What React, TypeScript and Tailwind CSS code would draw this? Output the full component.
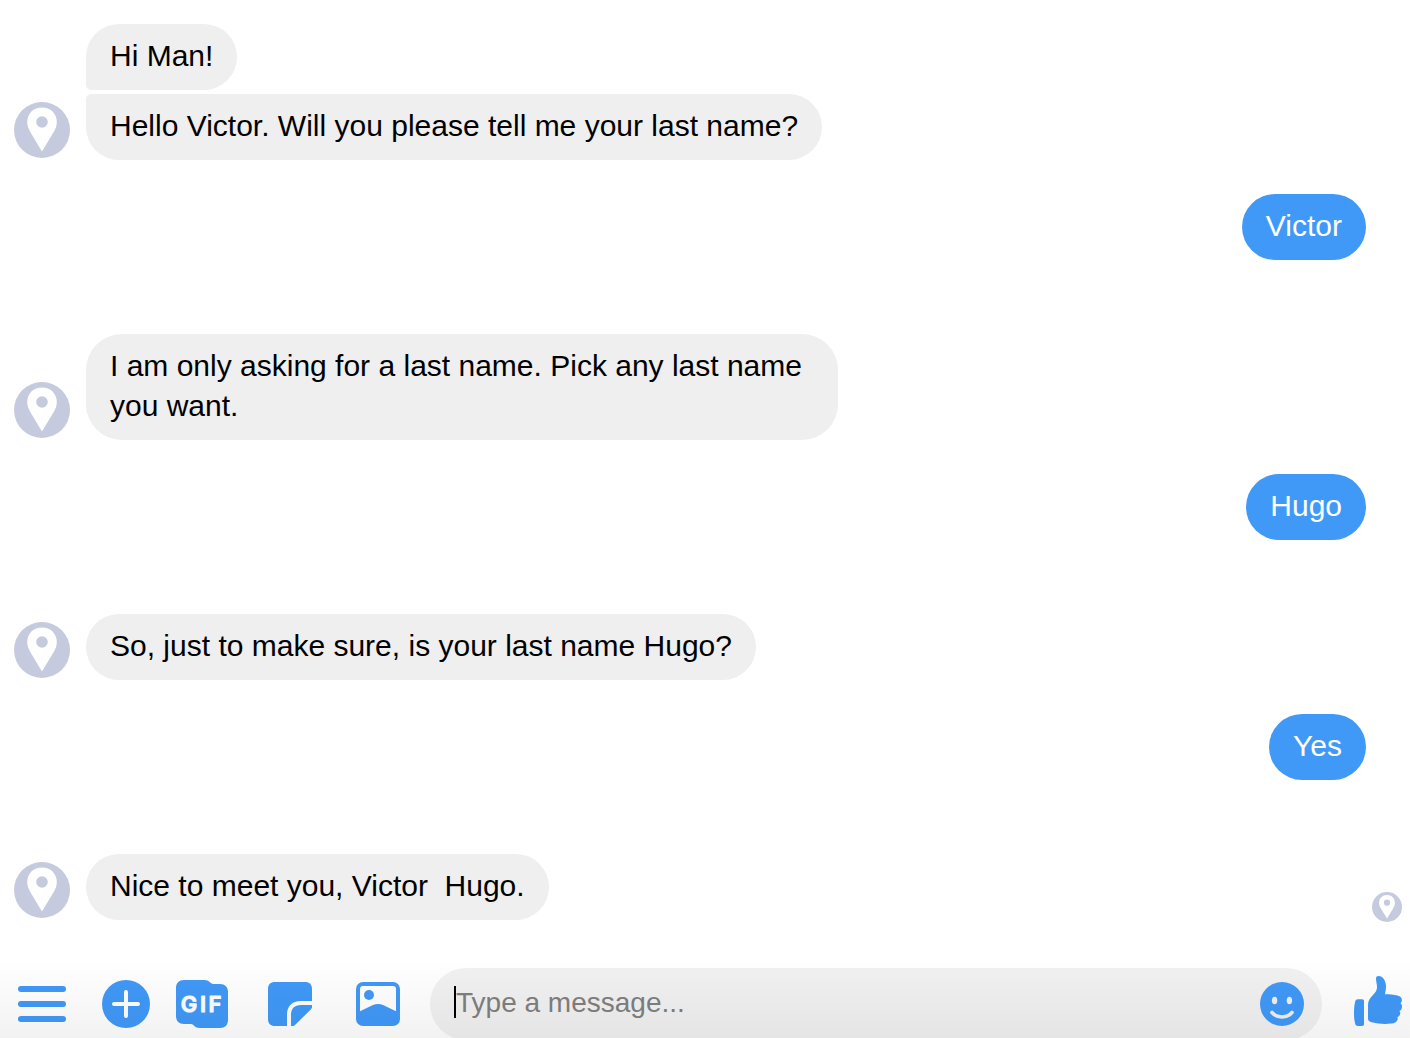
import { useState } from "react";

type Message = { from: "bot" | "me"; lines: string[] };

const messages: Message[] = [
  { from: "bot", lines: ["Hi Man!", "Hello Victor. Will you please tell me your last name?"] },
  { from: "me", lines: ["Victor"] },
  { from: "bot", lines: ["I am only asking for a last name. Pick any last name you want."] },
  { from: "me", lines: ["Hugo"] },
  { from: "bot", lines: ["So, just to make sure, is your last name Hugo?"] },
  { from: "me", lines: ["Yes"] },
  { from: "bot", lines: ["Nice to meet you, Victor  Hugo."] },
];

function PinAvatar({ className }: { className: string }) {
  return (
    <svg viewBox="0 0 56 56" className={className} role="img" aria-label="Bot">
      <circle cx="28" cy="28" r="28" fill="#c6cade" />
      <path
        d="M28 5.5C19.5 5.5 13.2 11.6 13.2 20c0 4 1.4 7 3.4 10.600L28 49.500l11.400-18.900c2-3.600 3.400-6.600 3.400-10.600C42.800 11.600 36.500 5.500 28 5.500z"
        fill="#fff"
      />
      <circle cx="28" cy="20" r="5.800" fill="#c6cade" />
    </svg>
  );
}

function BotGroup({ lines }: { lines: string[] }) {
  return (
    <div className="flex items-end gap-4">
      <PinAvatar className="mb-0.5 size-14 shrink-0" />
      <div className="flex max-w-[752px] flex-col items-start gap-1">
        {lines.map((line, i) => (
          <p
            key={line}
            className={
              "whitespace-pre-wrap rounded-[36px] bg-[#efefef] px-6 pt-3 pb-3.5 text-black " +
              (i > 0 ? "rounded-tl-md " : "") +
              (i < lines.length - 1 ? "rounded-bl-md" : "")
            }
          >
            {line}
          </p>
        ))}
      </div>
    </div>
  );
}

function MenuIcon() {
  return (
    <svg viewBox="0 0 48 48" className="size-12" fill="currentColor" aria-hidden="true">
      <rect y="6" width="48" height="6" rx="3" />
      <rect y="21" width="48" height="6" rx="3" />
      <rect y="36" width="48" height="6" rx="3" />
    </svg>
  );
}

function PlusIcon() {
  return (
    <svg viewBox="0 0 48 48" className="size-12" aria-hidden="true">
      <circle cx="24" cy="24" r="24" fill="currentColor" />
      <path d="M24 12v24M12 24h24" stroke="#fff" strokeWidth="4" strokeLinecap="round" />
    </svg>
  );
}

function GifIcon() {
  return (
    <svg viewBox="0 0 52 48" className="h-12 w-13" aria-hidden="true">
      <path
        d="M8 0h20c3.500 0 5 1.200 6.500 2.800C35.600 3.800 36.500 4 38 4h6c5 0 8 3 8 8v28c0 5-3 8-8 8H24c-3.500 0-5-1.200-6.500-2.800C16.400 44.200 15.500 44 14 44H8c-5 0-8-3-8-8V8c0-5 3-8 8-8z"
        fill="currentColor"
      />
      <text
        y="32"
        textAnchor="middle"
        fill="#fff"
        stroke="#fff"
        strokeWidth="1"
        strokeLinejoin="round"
        className="font-[Inter,sans-serif] text-[22px] font-semibold"
      >
        <tspan x="13">G</tspan>
        <tspan x="27">I</tspan>
        <tspan x="39">F</tspan>
      </text>
    </svg>
  );
}

function StickerIcon() {
  return (
    <svg viewBox="0 0 44 44" className="size-11" fill="currentColor" aria-hidden="true">
      <path d="M7 0h30c4.500 0 7 2.500 7 7v12H33c-9 0-14 5-14 14v11H7c-4.500 0-7-2.500-7-7V7c0-4.500 2.500-7 7-7z" />
      <path d="M33 23h11v2c0 1-.5 1.700-1.200 2.400L27 43c-.7.700-1.200 1-2 1h-2V33c0-6.500 3.500-10 10-10z" />
    </svg>
  );
}

function PhotoIcon() {
  return (
    <svg viewBox="0 0 44 44" className="size-11" aria-hidden="true">
      <rect width="44" height="44" rx="7" fill="currentColor" />
      <path
        d="M7 4h30c2 0 3 1 3 3v22.200L27 23c-3.400-1.400-6.600-1.400-10 0L4 29.200V7c0-2 1-3 3-3z"
        fill="#fff"
      />
      <circle cx="13" cy="13" r="5" fill="currentColor" />
    </svg>
  );
}

function SmileIcon() {
  return (
    <svg viewBox="0 0 44 44" className="size-11" aria-hidden="true">
      <circle cx="22" cy="22" r="22" fill="currentColor" />
      <ellipse cx="14.600" cy="18.500" rx="2.700" ry="3.800" fill="#f0f0f0" />
      <ellipse cx="29.400" cy="18.500" rx="2.700" ry="3.800" fill="#f0f0f0" />
      <path
        d="M12 30.500c5 6 15 6 20 0"
        fill="none"
        stroke="#f0f0f0"
        strokeWidth="3.600"
        strokeLinecap="round"
      />
    </svg>
  );
}

function ThumbIcon() {
  return (
    <svg viewBox="0 0 48 56" className="h-14 w-12" fill="currentColor" aria-hidden="true">
      <path d="M4 23.300h4c1.300 0 2 .7 2 2V48c0 1.300-.7 2-2 2H4c-1.500 0-2.400-.7-2.800-2.200C.2 44 0 41 0 37s.2-7.500 1.200-11.500c.4-1.500 1.300-2.200 2.800-2.200z" />
      <path d="M14 29C14 25 15.500 22.500 18.500 19.500C21.500 16.300 22.900 14.500 23 11.500C23.100 8.500 22 6 22 2.500C22 .8 23 0 24.500 0C29 0 32 5 32 10.500C32 13.500 31.400 15.500 31 18.200C35.500 18.200 40 18.500 43.500 19.500C47 20.500 48.300 22.500 47.800 25C47.600 26 47.200 26.700 46.500 27.200C47.600 28 48 29.200 48 30.600C48 32.600 47.200 34.200 45.400 35C46.200 35.800 46.400 36.700 46.200 37.800C45.900 39.500 45 40.600 43.400 41.200C43.800 42.100 43.800 42.900 43.400 43.900C42.500 46.300 40.400 47.100 37.400 47.500C33.400 48.100 28.400 48.100 24.400 47.500C21.400 47 19.400 46.500 17 46C15 45.500 14 44.500 14 42.500z" />
    </svg>
  );
}

export default function App() {
  const [draft, setDraft] = useState("");

  return (
    <div className="flex h-screen flex-col overflow-hidden bg-white font-['Liberation_Sans',Arial,sans-serif]">
      <main className="flex min-h-0 flex-1 items-end">
        <div className="flex min-w-0 flex-1 flex-col self-start pt-6 pl-3.5 text-[30px] leading-10">
          {messages.map((m, i) =>
            m.from === "bot" ? (
              <div key={i} className={i > 0 ? "mt-[74px]" : ""}>
                <BotGroup lines={m.lines} />
              </div>
            ) : (
              <p
                key={i}
                className="mt-[34px] mr-1.5 self-end rounded-[36px] bg-[#4099f7] px-6 pt-3 pb-3.5 text-white"
              >
                {m.lines[0]}
              </p>
            ),
          )}
        </div>
        <PinAvatar className="mr-2 mb-9 size-[30px] shrink-0" />
      </main>

      <footer className="relative h-20 shrink-0 overflow-hidden pt-2.5">
        <form
          className="flex h-18 items-center pr-2 pl-[18px] text-[#4099f7]"
          onSubmit={(e) => e.preventDefault()}
        >
          <button type="button" aria-label="Menu">
            <MenuIcon />
          </button>
          <button type="button" aria-label="Add attachment" className="ml-9">
            <PlusIcon />
          </button>
          <button type="button" aria-label="Choose a GIF" className="ml-[26px]">
            <GifIcon />
          </button>
          <button type="button" aria-label="Choose a sticker" className="ml-10">
            <StickerIcon />
          </button>
          <button type="button" aria-label="Add photo" className="ml-11">
            <PhotoIcon />
          </button>
          <div className="ml-[30px] flex h-18 min-w-0 flex-1 items-center rounded-full bg-[#f1f1f1] pr-[18px] pl-6">
            <span className="mb-1 h-8 w-0.5 shrink-0 bg-black" aria-hidden="true" />
            <input
              type="text"
              aria-label="Message"
              placeholder="Type a message..."
              value={draft}
              onChange={(e) => setDraft(e.target.value)}
              className="mb-0.5 h-10 min-w-0 flex-1 bg-transparent text-[28px] text-black caret-transparent outline-none placeholder:text-[#7f7f7f]"
            />
            <button type="button" aria-label="Choose an emoji">
              <SmileIcon />
            </button>
          </div>
          <button type="button" aria-label="Send a like" className="ml-8">
            <ThumbIcon />
          </button>
        </form>
        <div className="pointer-events-none absolute inset-0 bg-linear-to-b from-transparent to-black/5" />
      </footer>
    </div>
  );
}
